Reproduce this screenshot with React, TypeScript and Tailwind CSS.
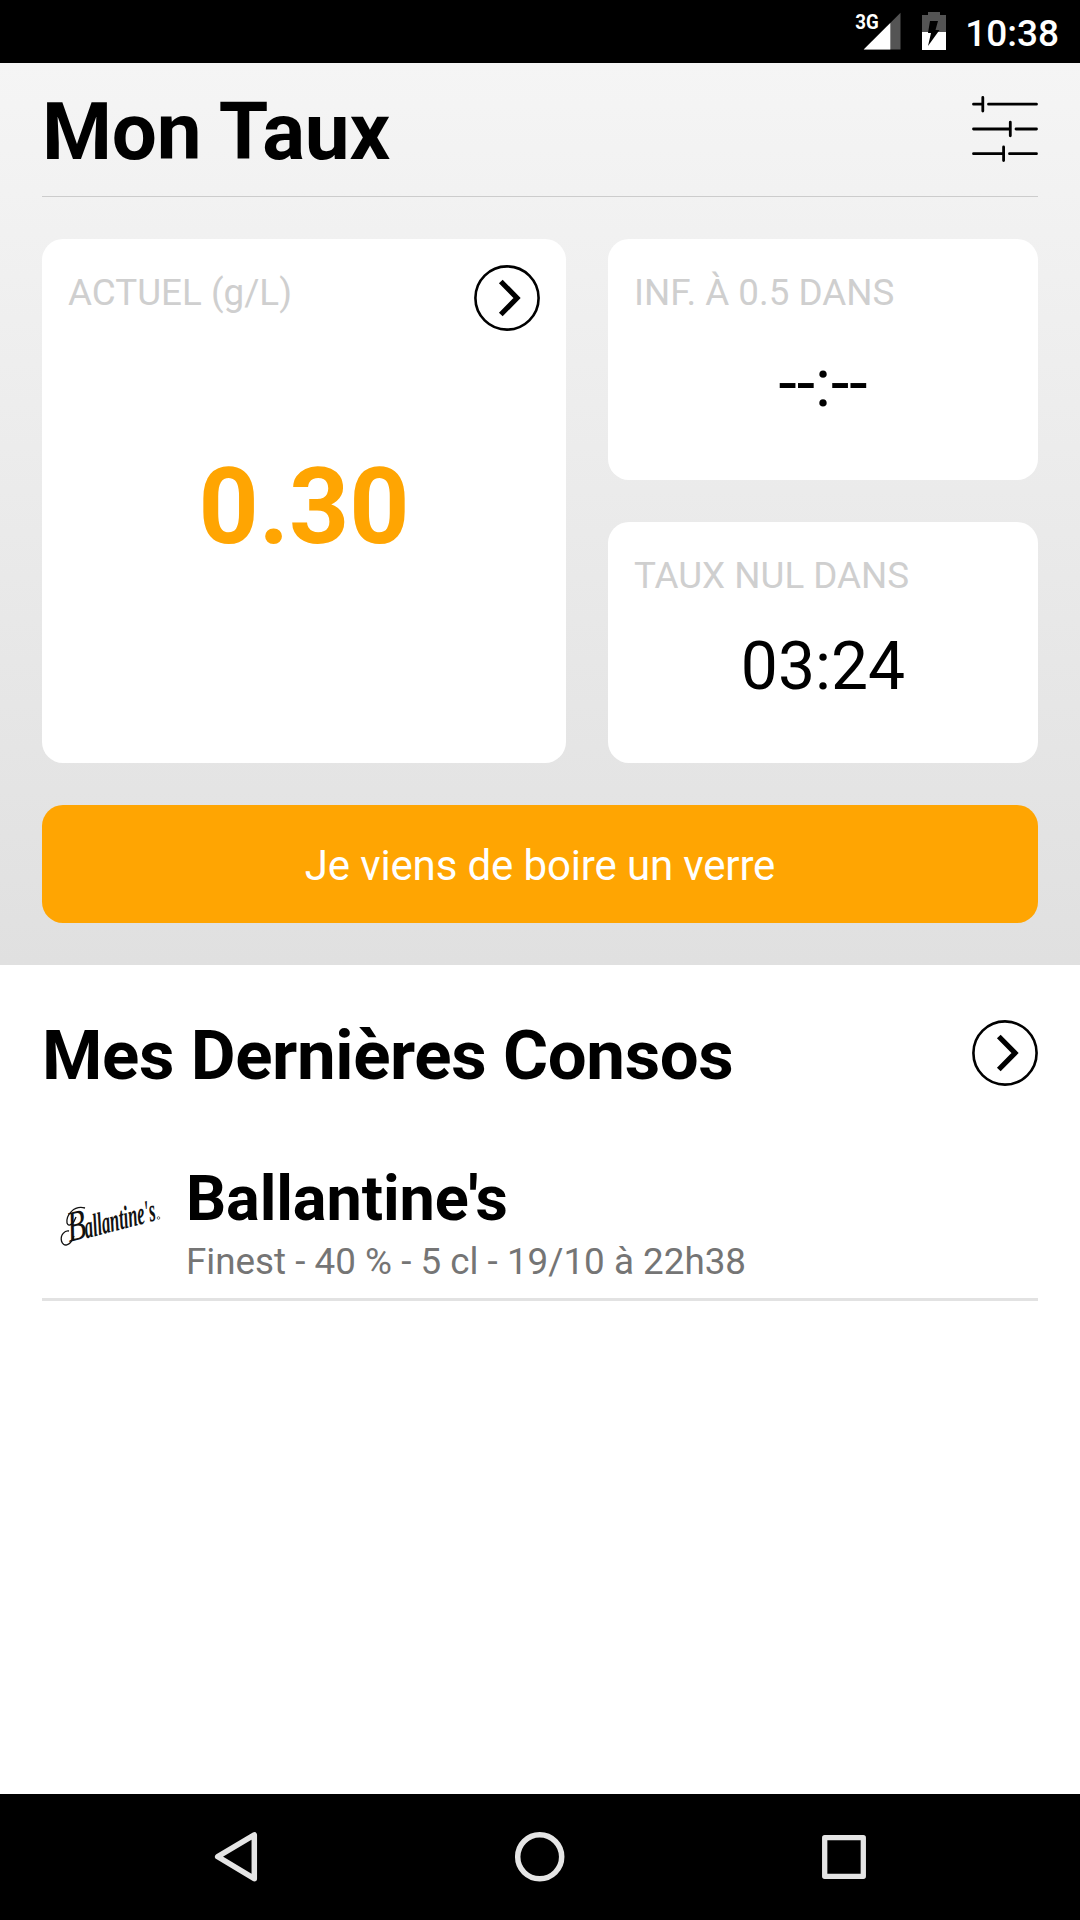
import React from "react";

const stats = [
  { label: "INF. À 0.5 DANS", value: "--:--" },
  { label: "TAUX NUL DANS", value: "03:24" },
];

const drinks = [{ name: "Ballantine's", details: "Finest - 40 % - 5 cl - 19/10 à 22h38" }];

const StatusBar: React.FC = () => (
  <div className="h-[63px] bg-black flex items-start justify-end pr-[21px]">
    <svg width="50" height="44" viewBox="0 -4 50 44" className="mt-[8px] mr-[18px]">
      <path d="M46.500 0.700V37.500H9.700Z" fill="#545454" />
      <path d="M36.300 11V37.500H9.700Z" fill="#fff" />
      <text x="1.200" y="17" fill="#fff" fontSize="21" fontWeight="700" textLength="23.500" lengthAdjust="spacingAndGlyphs">
        3G
      </text>
    </svg>
    <svg width="24" height="38" viewBox="0 0 24 38" className="mt-[12px] mr-[19px]">
      <path d="M0 3H6V0H18V3H24V20H0Z" fill="#545454" />
      <path d="M0 20H24V38H0Z" fill="#fff" />
      <path d="M8 9H16L13.500 18H17.500L6 34L9 21H6Z" fill="#000" />
    </svg>
    <span className="text-white text-[37px] font-medium leading-[42px] mt-[13px]">10:38</span>
  </div>
);

const SlidersIcon: React.FC = () => (
  <svg width="66" height="66" viewBox="0 0 66 66" fill="none" stroke="#000" strokeWidth="2.800" strokeLinecap="round" className="-mt-px">
    <path d="M1.500 8.200H10.500M16.500 8.200H64.500M10.800 1.500V15" />
    <path d="M1.500 33H38M44 33H64.500M38.300 26.200V39.800" />
    <path d="M1.500 57.700H31.500M37.500 57.700H64.500M31.600 51V64.500" />
  </svg>
);

const ChevronButton: React.FC = () => (
  <button>
    <svg width="66" height="66" viewBox="0 0 66 66" fill="none" stroke="#000">
      <circle cx="33" cy="33" r="31.600" strokeWidth="2.600" />
      <path d="M26.800 16.500L43 33L26.800 49.500" strokeWidth="5.200" />
    </svg>
  </button>
);

const BrandLogo: React.FC = () => (
  <svg width="112" height="74" viewBox="0 -16 112 74" fill="#111" fontFamily="'Liberation Serif', serif" fontStyle="italic">
    <text transform="translate(10 43) rotate(-14) skewX(-6)" fontSize="43" textLength="19" lengthAdjust="spacingAndGlyphs">
      B
    </text>
    <text transform="translate(27 39.500) rotate(-14.500) skewX(-6)" fontSize="32" fontWeight="700" textLength="73" lengthAdjust="spacingAndGlyphs">
      allantine's
    </text>
    <path
      d="M26 9C15 6 7 16 8 24C10 29 15 24 17 18M15 37C11 48 4 48 2.500 42C1 36 6 31 10 32"
      fill="none"
      stroke="#111"
      strokeWidth="1.300"
    />
    <circle cx="99.500" cy="19" r="1.300" fill="none" stroke="#333" strokeWidth="0.700" />
  </svg>
);

const App: React.FC = () => {
  return (
    <div className="w-[1080px] h-[1920px] flex flex-col bg-white text-black font-['Roboto',sans-serif] overflow-hidden">
      <StatusBar />

      <section className="h-[902px] px-[42px] bg-linear-to-b from-[#f5f5f5] to-[#e0e0e0]">
        <header className="h-[134px] flex items-center justify-between border-b border-[#cccccc]">
          <h1 className="text-[80px] font-bold leading-none tracking-[-0.25px] pt-1">Mon Taux</h1>
          <SlidersIcon />
        </header>

        <div className="mt-[42px] flex gap-[42px]">
          <div className="w-[524px] h-[524px] p-[26px] pb-[80px] rounded-[21px] bg-white flex flex-col">
            <div className="flex justify-between">
              <p className="pt-[7px] text-[#cfcfcf] text-[36.8px] leading-[42px]">ACTUEL (g/L)</p>
              <ChevronButton />
            </div>
            <p className="flex-1 flex items-center justify-center text-[#ffa502] text-[105px] font-bold leading-none">
              0.30
            </p>
          </div>

          <div className="flex-1 flex flex-col gap-[42px]">
            {stats.map((stat) => (
              <div key={stat.label} className="h-[241px] px-[26px] pt-[33px] pb-[26px] rounded-[21px] bg-white flex flex-col">
                <p className="text-[#cfcfcf] text-[36.8px] leading-[42px]">{stat.label}</p>
                <p className="flex-1 flex items-center justify-center text-[66px] leading-none">{stat.value}</p>
              </div>
            ))}
          </div>
        </div>

        <button className="mt-[42px] w-full h-[118px] pt-[4px] rounded-[21px] bg-[#ffa502] text-white text-[42px] leading-none tracking-[-0.14px]">
          Je viens de boire un verre
        </button>
      </section>

      <section className="flex-1 px-[42px] pt-[55px]">
        <div className="h-[66px] flex items-center justify-between">
          <h2 className="text-[69px] font-bold leading-[66px] tracking-[-0.38px] pt-[5px]">Mes Dernières Consos</h2>
          <ChevronButton />
        </div>

        <ul className="mt-[70px]">
          {drinks.map((drink) => (
            <li key={drink.name} className="h-[145px] flex border-b-[3px] border-[#e2e2e2]">
              <div className="w-[144px] pl-[17px] pt-[27px]">
                <BrandLogo />
              </div>
              <div>
                <h3 className="text-[63px] font-bold leading-[74px] tracking-[-0.1px] pt-[6px]">{drink.name}</h3>
                <p className="text-[#757575] text-[36.8px] leading-[42px] pt-[5px]">{drink.details}</p>
              </div>
            </li>
          ))}
        </ul>
      </section>

      <nav className="h-[126px] bg-black">
        <svg width="1080" height="126" viewBox="0 0 1080 126" fill="none" stroke="#e5e5e5" strokeWidth="5.500" strokeLinejoin="round">
          <path d="M254.300 40.800V84.700L217.700 62.700Z" />
          <circle cx="539.700" cy="62.800" r="22" />
          <rect x="824.700" y="43.700" width="38.600" height="38.600" strokeWidth="5.300" />
        </svg>
      </nav>
    </div>
  );
};

export default App;
